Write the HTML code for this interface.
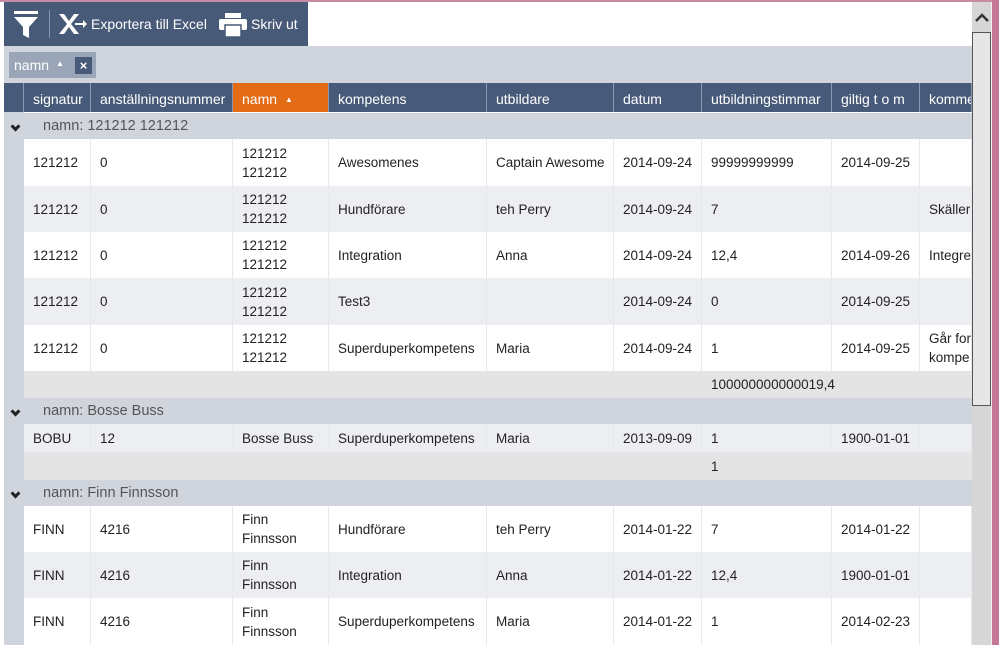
<!DOCTYPE html>
<html><head><meta charset="utf-8"><style>
*{margin:0;padding:0;box-sizing:border-box}
body{width:999px;height:645px;overflow:hidden;background:#fff;font-family:"Liberation Sans",sans-serif;font-size:13.5px;color:#222;position:relative}
.abs{position:absolute}
.row{position:absolute;left:24px;width:948px;display:flex}
.row div{border-right:1px solid #e6e8ec;padding-left:9px;display:flex;align-items:center;overflow:hidden;white-space:nowrap;line-height:19px}
.c1{width:67px}.c2{width:142px}.c3{width:96px}.c4{width:158px}.c5{width:127px}.c6{width:88px}.c7{width:130px}.c8{width:88px}.c9{width:52px}
.w{background:#fff}.g{background:#eceef2}
.hdr{top:83px;height:29px;background:#485a79;color:#fff;font-size:14px}
.hdr div{border-right:1px solid #8a97ad;padding-top:3px}
.grp{position:absolute;left:4px;width:968px;background:#d0d5dd;color:#555;font-size:14.5px}
.grp span{position:absolute;left:39px;top:50%;transform:translateY(-50%)}
.chev{position:absolute;left:8px;top:50%;margin-top:-3px;width:7px;height:7px;border-right:3px solid #222;border-bottom:3px solid #222;transform:rotate(45deg)}
.ft{position:absolute;left:24px;width:948px;background:#e4e4e4}
</style></head><body>
<div class="abs" style="left:0;top:0;width:999px;height:2px;background:#c98aa3"></div>
<div class="abs" style="left:992px;top:0;width:7px;height:645px;background:#c47896"></div>
<div class="abs" style="left:4px;top:2px;width:304px;height:44px;background:#475a78;color:#fff;font-size:14px">
 <svg class="abs" style="left:8px;top:8px" width="28" height="30" viewBox="0 0 28 30"><rect x="2" y="1" width="24" height="3" fill="#fff"/><path d="M2 7h24l-9 10v11l-6-3v-8z" fill="#fff"/></svg>
 <div class="abs" style="left:45px;top:8px;width:1px;height:28px;background:#8895aa"></div>
 <svg class="abs" style="left:54px;top:10px" width="30" height="24" viewBox="0 0 30 24"><path d="M1 2h5l5 7 5-7h5l-8 10 8 10h-5l-5-7-5 7H1l8-10z" fill="#fff"/><path d="M17 11h8v-3l4 4-4 4v-3h-8z" fill="#fff"/></svg>
 <div class="abs" style="left:87px;top:14px">Exportera till Excel</div>
 <svg class="abs" style="left:214px;top:10px" width="30" height="26" viewBox="0 0 30 26"><rect x="7" y="1" width="16" height="5" fill="#fff"/><rect x="1" y="7" width="28" height="11" rx="2" fill="#fff"/><rect x="7" y="13" width="16" height="12" fill="#fff" stroke="#475a78" stroke-width="1.5"/></svg>
 <div class="abs" style="left:247px;top:14px">Skriv ut</div>
</div>
<div class="abs" style="left:4px;top:46px;width:968px;height:37px;background:#d0d5dd"></div>
<div class="abs" style="left:9px;top:52px;width:87px;height:26px;background:#9aa5b8;color:#fff;font-size:14px">
 <span class="abs" style="left:5px;top:5px">namn</span><span class="abs" style="left:47px;top:7px;font-size:8px">▲</span>
 <div class="abs" style="left:66px;top:5px;width:17px;height:17px;background:#485a79;color:#fff;font-size:13px;font-weight:bold;text-align:center;line-height:17px">×</div>
</div>
<div class="abs" style="left:4px;top:83px;width:20px;height:562px;background:#d0d5dd"></div>
<div class="abs" style="left:4px;top:83px;width:20px;height:29px;background:#485a79;border-right:1px solid #8a97ad"></div>
<div class="row hdr"><div class="c1">signatur</div><div class="c2">anställningsnummer</div><div class="c3" style="background:#e36b16">namn <span style="font-size:8px;margin-left:8px">▲</span></div><div class="c4">kompetens</div><div class="c5">utbildare</div><div class="c6">datum</div><div class="c7">utbildningstimmar</div><div class="c8">giltig t o m</div><div class="c9">kommentar</div></div>

<div class="grp" style="top:113px;height:26px"><i class="chev"></i><span>namn: 121212 121212</span></div>
<div class="row w" style="top:139px;height:47px"><div class="c1">121212</div><div class="c2">0</div><div class="c3" style="white-space:normal">121212<br>121212</div><div class="c4">Awesomenes</div><div class="c5">Captain Awesome</div><div class="c6">2014-09-24</div><div class="c7">99999999999</div><div class="c8">2014-09-25</div><div class="c9"></div></div>
<div class="row g" style="top:186px;height:46px"><div class="c1">121212</div><div class="c2">0</div><div class="c3" style="white-space:normal">121212<br>121212</div><div class="c4">Hundförare</div><div class="c5">teh Perry</div><div class="c6">2014-09-24</div><div class="c7">7</div><div class="c8"></div><div class="c9">Skäller</div></div>
<div class="row w" style="top:232px;height:46px"><div class="c1">121212</div><div class="c2">0</div><div class="c3" style="white-space:normal">121212<br>121212</div><div class="c4">Integration</div><div class="c5">Anna</div><div class="c6">2014-09-24</div><div class="c7">12,4</div><div class="c8">2014-09-26</div><div class="c9">Integrera</div></div>
<div class="row g" style="top:278px;height:47px"><div class="c1">121212</div><div class="c2">0</div><div class="c3" style="white-space:normal">121212<br>121212</div><div class="c4">Test3</div><div class="c5"></div><div class="c6">2014-09-24</div><div class="c7">0</div><div class="c8">2014-09-25</div><div class="c9"></div></div>
<div class="row w" style="top:325px;height:46px"><div class="c1">121212</div><div class="c2">0</div><div class="c3" style="white-space:normal">121212<br>121212</div><div class="c4">Superduperkompetens</div><div class="c5">Maria</div><div class="c6">2014-09-24</div><div class="c7">1</div><div class="c8">2014-09-25</div><div class="c9" style="white-space:normal">Går for kompe</div></div>
<div class="ft" style="top:371px;height:27px"><span class="abs" style="left:687px;top:6px">100000000000019,4</span></div>

<div class="grp" style="top:398px;height:26px"><i class="chev"></i><span>namn: Bosse Buss</span></div>
<div class="row g" style="top:424px;height:28px"><div class="c1">BOBU</div><div class="c2">12</div><div class="c3">Bosse Buss</div><div class="c4">Superduperkompetens</div><div class="c5">Maria</div><div class="c6">2013-09-09</div><div class="c7">1</div><div class="c8">1900-01-01</div><div class="c9"></div></div>
<div class="ft" style="top:452px;height:28px"><span class="abs" style="left:687px;top:7px">1</span></div>

<div class="grp" style="top:480px;height:26px"><i class="chev"></i><span>namn: Finn Finnsson</span></div>
<div class="row w" style="top:506px;height:46px"><div class="c1">FINN</div><div class="c2">4216</div><div class="c3" style="white-space:normal">Finn<br>Finnsson</div><div class="c4">Hundförare</div><div class="c5">teh Perry</div><div class="c6">2014-01-22</div><div class="c7">7</div><div class="c8">2014-01-22</div><div class="c9"></div></div>
<div class="row g" style="top:552px;height:46px"><div class="c1">FINN</div><div class="c2">4216</div><div class="c3" style="white-space:normal">Finn<br>Finnsson</div><div class="c4">Integration</div><div class="c5">Anna</div><div class="c6">2014-01-22</div><div class="c7">12,4</div><div class="c8">1900-01-01</div><div class="c9"></div></div>
<div class="row w" style="top:598px;height:47px"><div class="c1">FINN</div><div class="c2">4216</div><div class="c3" style="white-space:normal">Finn<br>Finnsson</div><div class="c4">Superduperkompetens</div><div class="c5">Maria</div><div class="c6">2014-01-22</div><div class="c7">1</div><div class="c8">2014-02-23</div><div class="c9"></div></div>

<div class="abs" style="left:972px;top:2px;width:20px;height:643px;background:#d6d6d6;border-right:1px solid #f2f2f2"></div>
<svg class="abs" style="left:974px;top:12px" width="16" height="12" viewBox="0 0 16 12"><path d="M2 9l6-6 6 6" fill="none" stroke="#333" stroke-width="2.5"/></svg>
<div class="abs" style="left:972px;top:32px;width:19px;height:374px;background:#e6e6e6;border:1px solid #555"></div>
</body></html>
